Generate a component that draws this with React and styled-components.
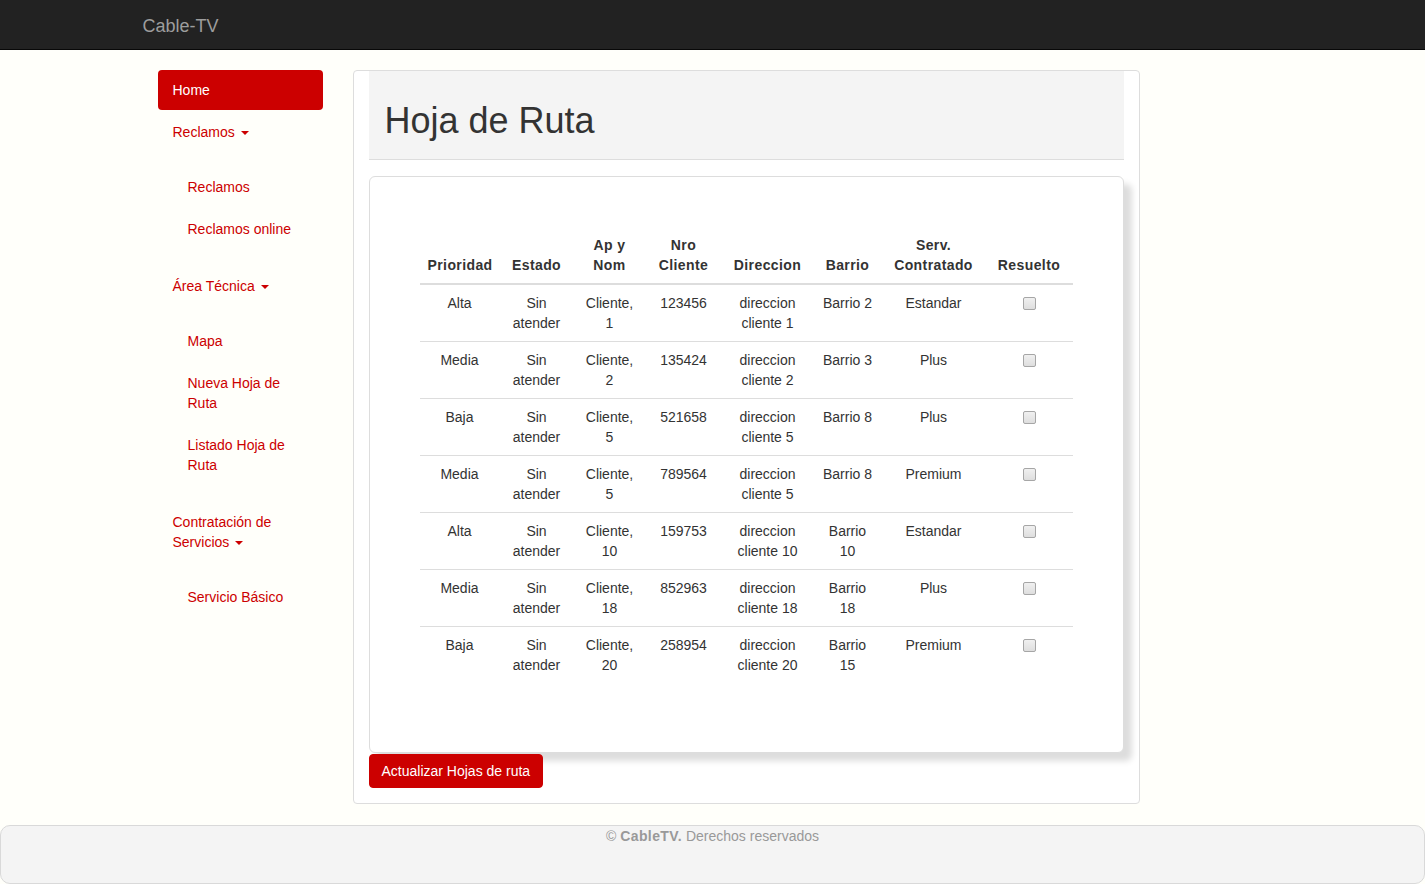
import styled, { createGlobalStyle } from "styled-components";

const GlobalStyle = createGlobalStyle`
  * {
    box-sizing: border-box;
  }
  body {
    margin: 0;
    background: #fffffa;
    font-family: "Liberation Sans", Arial, Helvetica, sans-serif;
    font-size: 14px;
    line-height: 20px;
    color: #333;
  }
`;

const Navbar = styled.nav`
  height: 50px;
  background: #222;
  border-bottom: 1px solid #080808;
  margin-bottom: 20px;
`;

const Container = styled.div`
  width: 1170px;
  margin: 0 auto;
  padding: 0 15px;
`;

const NavInner = styled.div`
  width: 1170px;
  margin: 0 auto;
`;

const Brand = styled.a`
  display: inline-block;
  padding: 16px 15px 13px;
  font-size: 18px;
  line-height: 20px;
  color: #9d9d9d;
  text-decoration: none;
`;

const Row = styled.div`
  display: flex;
`;

const Sidebar = styled.div`
  width: 195px;
  flex: none;
  padding: 0 15px;
`;

const NavList = styled.ul`
  list-style: none;
  margin: 0;
  padding: ${(p) => (p.$sub ? "15px 0 15px 15px" : "0")};

  & > li + li {
    margin-top: 2px;
  }
`;

const NavLink = styled.a`
  display: block;
  padding: 10px 15px;
  border-radius: 4px;
  color: ${(p) => (p.$active ? "#fff" : "#cc0000")};
  background: ${(p) => (p.$active ? "#cc0000" : "transparent")};
  text-decoration: none;
  cursor: pointer;
`;

const Caret = styled.span`
  display: inline-block;
  width: 0;
  height: 0;
  margin-left: 6px;
  vertical-align: middle;
  border-top: 4px solid #cc0000;
  border-left: 4px solid transparent;
  border-right: 4px solid transparent;
`;

const Main = styled.div`
  flex: 1;
  padding: 0 15px;
`;

const Panel = styled.div`
  width: 787px;
  background: #fff;
  border: 1px solid #ddd;
  border-radius: 4px;
  padding: 0 15px 15px;
`;

const PageHeader = styled.div`
  background: #f4f4f4;
  border-bottom: 1px solid #ddd;
  padding: 30px 16px 18px;
`;

const Title = styled.h1`
  margin: 0;
  font-size: 36px;
  font-weight: 400;
  line-height: 40px;
  color: #333;
`;

const Card = styled.div`
  margin-top: 16px;
  background: #fff;
  border: 1px solid #ddd;
  border-radius: 6px;
  box-shadow: 8px 8px 6px #dddddd;
  padding: 50px 50px 49px;
`;

const Table = styled.table`
  width: 100%;
  table-layout: fixed;
  border-collapse: collapse;
  margin-bottom: 20px;

  th,
  td {
    padding: 8px;
    text-align: center;
    line-height: 20px;
  }

  td {
    vertical-align: top;
    border-top: 1px solid #ddd;
  }
`;

const Th = styled.th`
  width: ${(p) => p.$w}px;
  font-weight: 700;
  letter-spacing: 0.4px;
  vertical-align: bottom;
  border-bottom: 2px solid #ddd;
`;

const Check = styled.input`
  appearance: none;
  width: 13px;
  height: 13px;
  margin: 4px 0 0;
  border: 1px solid #a6a6a6;
  border-radius: 2px;
  background: linear-gradient(#f0f0f0, #dedede);
  vertical-align: top;
`;

const Button = styled.button`
  margin-top: 1px;
  padding: 6px 12px;
  font-family: inherit;
  font-size: 14px;
  line-height: 20px;
  color: #fff;
  background: #cc0000;
  border: 1px solid #cc0000;
  border-radius: 4px;
  cursor: pointer;
`;

const Footer = styled.footer`
  margin-top: 21px;
  height: 59px;
  background: #f4f4f4;
  border: 1px solid #d9d9d9;
  border-radius: 10px;
  text-align: center;
  color: #999;

  b {
    letter-spacing: 0.4px;
  }
`;

const menu = [
  {
    title: "Reclamos",
    items: ["Reclamos", "Reclamos online"],
  },
  {
    title: "Área Técnica",
    items: ["Mapa", "Nueva Hoja de Ruta", "Listado Hoja de Ruta"],
  },
  {
    title: "Contratación de Servicios",
    items: ["Servicio Básico"],
  },
];

const columns = [
  { title: "Prioridad", w: 80 },
  { title: "Estado", w: 74 },
  { title: "Ap y Nom", w: 72 },
  { title: "Nro Cliente", w: 76 },
  { title: "Direccion", w: 92 },
  { title: "Barrio", w: 68 },
  { title: "Serv. Contratado", w: 104 },
  { title: "Resuelto", w: 87 },
];

const rows = [
  ["Alta", "Cliente, 1", "123456", "direccion cliente 1", "Barrio 2", "Estandar"],
  ["Media", "Cliente, 2", "135424", "direccion cliente 2", "Barrio 3", "Plus"],
  ["Baja", "Cliente, 5", "521658", "direccion cliente 5", "Barrio 8", "Plus"],
  ["Media", "Cliente, 5", "789564", "direccion cliente 5", "Barrio 8", "Premium"],
  ["Alta", "Cliente, 10", "159753", "direccion cliente 10", "Barrio 10", "Estandar"],
  ["Media", "Cliente, 18", "852963", "direccion cliente 18", "Barrio 18", "Plus"],
  ["Baja", "Cliente, 20", "258954", "direccion cliente 20", "Barrio 15", "Premium"],
];

const App = () => {
  return (
    <>
      <GlobalStyle />
      <Navbar>
        <NavInner>
          <Brand>Cable-TV</Brand>
        </NavInner>
      </Navbar>
      <Container>
        <Row>
          <Sidebar>
            <NavList>
              <li>
                <NavLink $active>Home</NavLink>
              </li>
              {menu.map((section) => (
                <li key={section.title}>
                  <NavLink>
                    {section.title}
                    <Caret />
                  </NavLink>
                  <NavList $sub>
                    {section.items.map((item) => (
                      <li key={item}>
                        <NavLink>{item}</NavLink>
                      </li>
                    ))}
                  </NavList>
                </li>
              ))}
            </NavList>
          </Sidebar>
          <Main>
            <Panel>
              <PageHeader>
                <Title>Hoja de Ruta</Title>
              </PageHeader>
              <Card>
                <Table>
                  <thead>
                    <tr>
                      {columns.map((c) => (
                        <Th key={c.title} $w={c.w}>
                          {c.title}
                        </Th>
                      ))}
                    </tr>
                  </thead>
                  <tbody>
                    {rows.map((r, i) => (
                      <tr key={i}>
                        <td>{r[0]}</td>
                        <td>Sin atender</td>
                        <td>{r[1]}</td>
                        <td>{r[2]}</td>
                        <td>{r[3]}</td>
                        <td>{r[4]}</td>
                        <td>{r[5]}</td>
                        <td>
                          <Check type="checkbox" />
                        </td>
                      </tr>
                    ))}
                  </tbody>
                </Table>
              </Card>
              <Button>Actualizar Hojas de ruta</Button>
            </Panel>
          </Main>
        </Row>
      </Container>
      <Footer>
        © <b>CableTV.</b> Derechos reservados
      </Footer>
    </>
  );
};

export default App;
